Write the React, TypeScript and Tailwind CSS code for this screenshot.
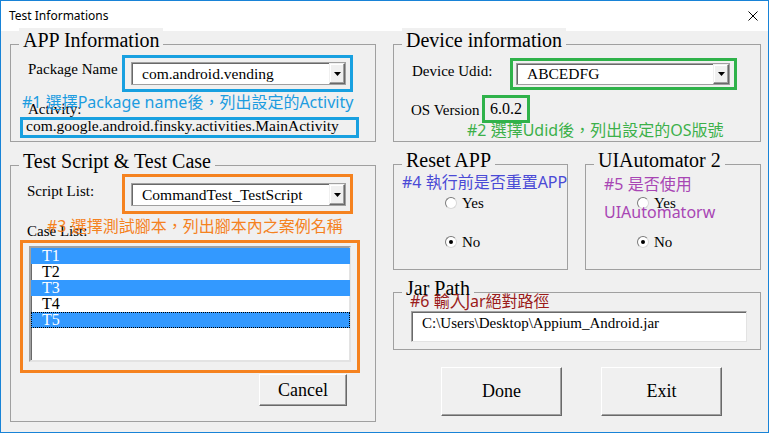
import React from "react";

function Combo({ text, className }: { text: string; className: string }) {
  return (
    <div className={`flex bg-white border border-[#a0a0a0] shadow-[inset_1px_1px_0_#696969] ${className}`}>
      <div className="flex-1 flex items-center pl-[10px] text-[15.5px] whitespace-nowrap overflow-hidden">{text}</div>
      <div className="w-[16px] flex items-center justify-center bg-[#f0f0f0] border border-t-[#f0f0f0] border-l-[#f0f0f0] border-r-[#696969] border-b-[#696969] shadow-[inset_-1px_-1px_0_#a0a0a0,inset_1px_1px_0_#ffffff]">
        <svg width="7" height="4" viewBox="0 0 7 4">
          <path d="M0 0H7L3.5 4Z" fill="#000" />
        </svg>
      </div>
    </div>
  );
}

function Title({ text }: { text: string }) {
  return (
    <div className="-mt-[17px] ml-[8px] px-[4px] w-fit bg-[#f0f0f0] text-[20px] leading-[24px] whitespace-nowrap">
      {text}
    </div>
  );
}

function Radio({ checked, label }: { checked: boolean; label: string }) {
  return (
    <div className="flex items-center h-[20px] gap-[5px]">
      <div className="w-[12px] h-[12px] rounded-full bg-white border border-t-[#7a7a7a] border-l-[#7a7a7a] border-r-[#d8d8d8] border-b-[#d8d8d8] flex items-center justify-center">
        {checked && <div className="w-[4px] h-[4px] rounded-full bg-black" />}
      </div>
      <span className="text-[15px] leading-[16px]">{label}</span>
    </div>
  );
}

function Btn({ label, className }: { label: string; className: string }) {
  return (
    <button
      type="button"
      className={`flex items-center justify-center bg-[#f0f0f0] border border-t-white border-l-white border-r-[#696969] border-b-[#696969] shadow-[inset_-1px_-1px_0_#a0a0a0] text-[18px] ${className}`}
    >
      {label}
    </button>
  );
}

const note = "absolute whitespace-nowrap text-[16px] leading-[16px] font-['Noto_Sans','Noto_Sans_CJK_TC',sans-serif]";

export default function App() {
  const items = [
    { t: "T1", sel: true, focus: false },
    { t: "T2", sel: false, focus: false },
    { t: "T3", sel: true, focus: false },
    { t: "T4", sel: false, focus: false },
    { t: "T5", sel: true, focus: true },
  ];
  return (
    <div className="w-[769px] h-[433px] border border-[#1883d7] bg-[#f0f0f0] flex flex-col font-['Liberation_Serif',serif] text-black overflow-hidden">
      <div className="h-[30px] shrink-0 bg-white flex items-center justify-between pl-[8px] pr-[10px]">
        <span className="font-['Noto_Sans',sans-serif] text-[12px]">Test Informations</span>
        <svg width="10" height="10" viewBox="0 0 10 10">
          <path d="M0.5 0.5L9.5 9.5M9.5 0.5L0.5 9.5" stroke="#000" strokeWidth="1" />
        </svg>
      </div>

      <div className="flex gap-[17px] pl-[9px]">
        {/* Left column */}
        <div className="w-[366px] flex flex-col">
          <div className="relative mt-[13px] h-[98px] border border-[#a0a0a0] flex flex-col">
            <Title text="APP Information" />
            <div className="flex mt-[3px] ml-[17px]">
              <div className="w-[94px] pt-[6px] text-[15px] leading-[16px] whitespace-nowrap">Package Name</div>
              <div className="w-[231px] h-[37px] border-[3px] border-[#18a0e0] pl-[6px] pt-[4px]">
                <Combo text="com.android.vending" className="w-[215px] h-[23px]" />
              </div>
            </div>
            <div className="mt-[9px] ml-[17px] text-[15px] leading-[16px]">Activity:</div>
            <div className="ml-[9px] w-[339px] h-[21px] border-[3px] border-[#18a0e0] pl-[3px] text-[15.5px] leading-[15px] whitespace-nowrap">
              <div className="-mt-[2px]">com.google.android.finsky.activities.MainActivity</div>
            </div>
            <div className={`${note} top-[49px] left-[11px] text-[#1c9ce0]`}>#1 選擇Package name後，列出設定的Activity</div>
          </div>

          <div className="relative mt-[23px] h-[257px] border border-[#a0a0a0] flex flex-col">
            <Title text="Test Script & Test Case" />
            <div className="flex mt-[1px] ml-[16px]">
              <div className="w-[95px] pt-[9px] text-[15px] leading-[16px] whitespace-nowrap">Script List:</div>
              <div className="w-[231px] h-[40px] border-[3px] border-[#f5821f] pl-[6px] pt-[6px]">
                <Combo text="CommandTest_TestScript" className="w-[215px] h-[23px]" />
              </div>
            </div>
            <div className="mt-[9px] ml-[16px] text-[15px] leading-[16px]">Case List:</div>
            <div className="mt-[1px] ml-[9px] w-[340px] h-[133px] border-[3px] border-[#f5821f] pl-[6px] pt-[3px]">
              <div className="w-[322px] h-[116px] bg-white border-2 border-t-[#a0a0a0] border-l-[#a0a0a0] border-r-[#e3e3e3] border-b-[#e3e3e3] shadow-[inset_1px_1px_0_#696969] flex flex-col">
                {items.map((it) =>
                  it.focus ? (
                    <div key={it.t} className="h-[16px] mr-[-1px] pl-[10px] text-[16px] leading-[14px] bg-[#3399ff] text-white border border-dotted border-black">
                      {it.t}
                    </div>
                  ) : (
                    <div
                      key={it.t}
                      className={`h-[16px] mr-[-1px] pl-[11px] text-[16px] leading-[16px] ${it.sel ? "bg-[#3399ff] text-white" : "text-black"}`}
                    >
                      {it.t}
                    </div>
                  )
                )}
              </div>
            </div>
            <div className="flex justify-end pr-[28px] mt-[1px]">
              <Btn label="Cancel" className="w-[88px] h-[32px]" />
            </div>
            <div className={`${note} top-[52px] left-[36px] text-[#f5821f]`}>#3 選擇測試腳本，列出腳本內之案例名稱</div>
          </div>
        </div>

        {/* Right column */}
        <div className="w-[368px] flex flex-col">
          <div className="relative mt-[13px] h-[98px] border border-[#a0a0a0] flex flex-col">
            <Title text="Device information" />
            <div className="flex mt-[6px] ml-[18px]">
              <div className="w-[98px] pt-[5px] text-[15px] leading-[16px] whitespace-nowrap">Device Udid:</div>
              <div className="w-[227px] h-[32px] border-[3px] border-[#2fb24a] pl-[3px] pt-[2px]">
                <Combo text="ABCEDFG" className="w-[214px] h-[22px]" />
              </div>
            </div>
            <div className="flex mt-[5px] ml-[17px]">
              <div className="w-[71px] pt-[7px] text-[15px] leading-[16px] whitespace-nowrap">OS Version</div>
              <div className="w-[48px] h-[28px] border-[3px] border-[#2fb24a] pl-[5px] text-[16px] leading-[22px]">6.0.2</div>
            </div>
            <div className={`${note} top-[77px] left-[73px] text-[#3cb04a]`}>#2 選擇Udid後，列出設定的OS版號</div>
          </div>

          <div className="flex gap-[17px] mt-[22px]">
            <div className="relative w-[175px] h-[106px] border border-[#a0a0a0] flex flex-col">
              <Title text="Reset APP" />
              <div className="mt-[21px] ml-[51px]">
                <Radio checked={false} label="Yes" />
              </div>
              <div className="mt-[19px] ml-[51px]">
                <Radio checked={true} label="No" />
              </div>
              <div className={`${note} top-[9px] left-[8px] text-[#4a4ad6]`}>#4 執行前是否重置APP</div>
            </div>
            <div className="relative w-[176px] h-[106px] border border-[#a0a0a0] flex flex-col">
              <Title text="UIAutomator 2" />
              <div className="mt-[21px] ml-[51px]">
                <Radio checked={false} label="Yes" />
              </div>
              <div className="mt-[19px] ml-[51px]">
                <Radio checked={true} label="No" />
              </div>
              <div className="absolute top-[5px] left-[18px] text-[16px] leading-[28px] font-['Noto_Sans','Noto_Sans_CJK_TC',sans-serif] text-[#a846b4] whitespace-nowrap">
                <div>#5 是否使用</div>
                <div>UIAutomatorw</div>
              </div>
            </div>
          </div>

          <div className="relative mt-[22px] h-[58px] border border-[#a0a0a0] flex flex-col">
            <Title text="Jar Path" />
            <div className="ml-[17px] mt-[11px] w-[336px] h-[31px] bg-white border border-t-[#a0a0a0] border-l-[#a0a0a0] border-r-[#e3e3e3] border-b-[#e3e3e3] shadow-[inset_1px_1px_0_#696969] pl-[10px] pb-[7px] flex items-center text-[15px] whitespace-nowrap">
              {"C:\\Users\\Desktop\\Appium_Android.jar"}
            </div>
            <div className={`${note} top-[0px] left-[16px] text-[#9b1b1b]`}>#6 輸入Jar絕對路徑</div>
          </div>

          <div className="flex gap-[39px] ml-[48px] mt-[17px]">
            <Btn label="Done" className="w-[121px] h-[49px]" />
            <Btn label="Exit" className="w-[121px] h-[49px]" />
          </div>
        </div>
      </div>
    </div>
  );
}
